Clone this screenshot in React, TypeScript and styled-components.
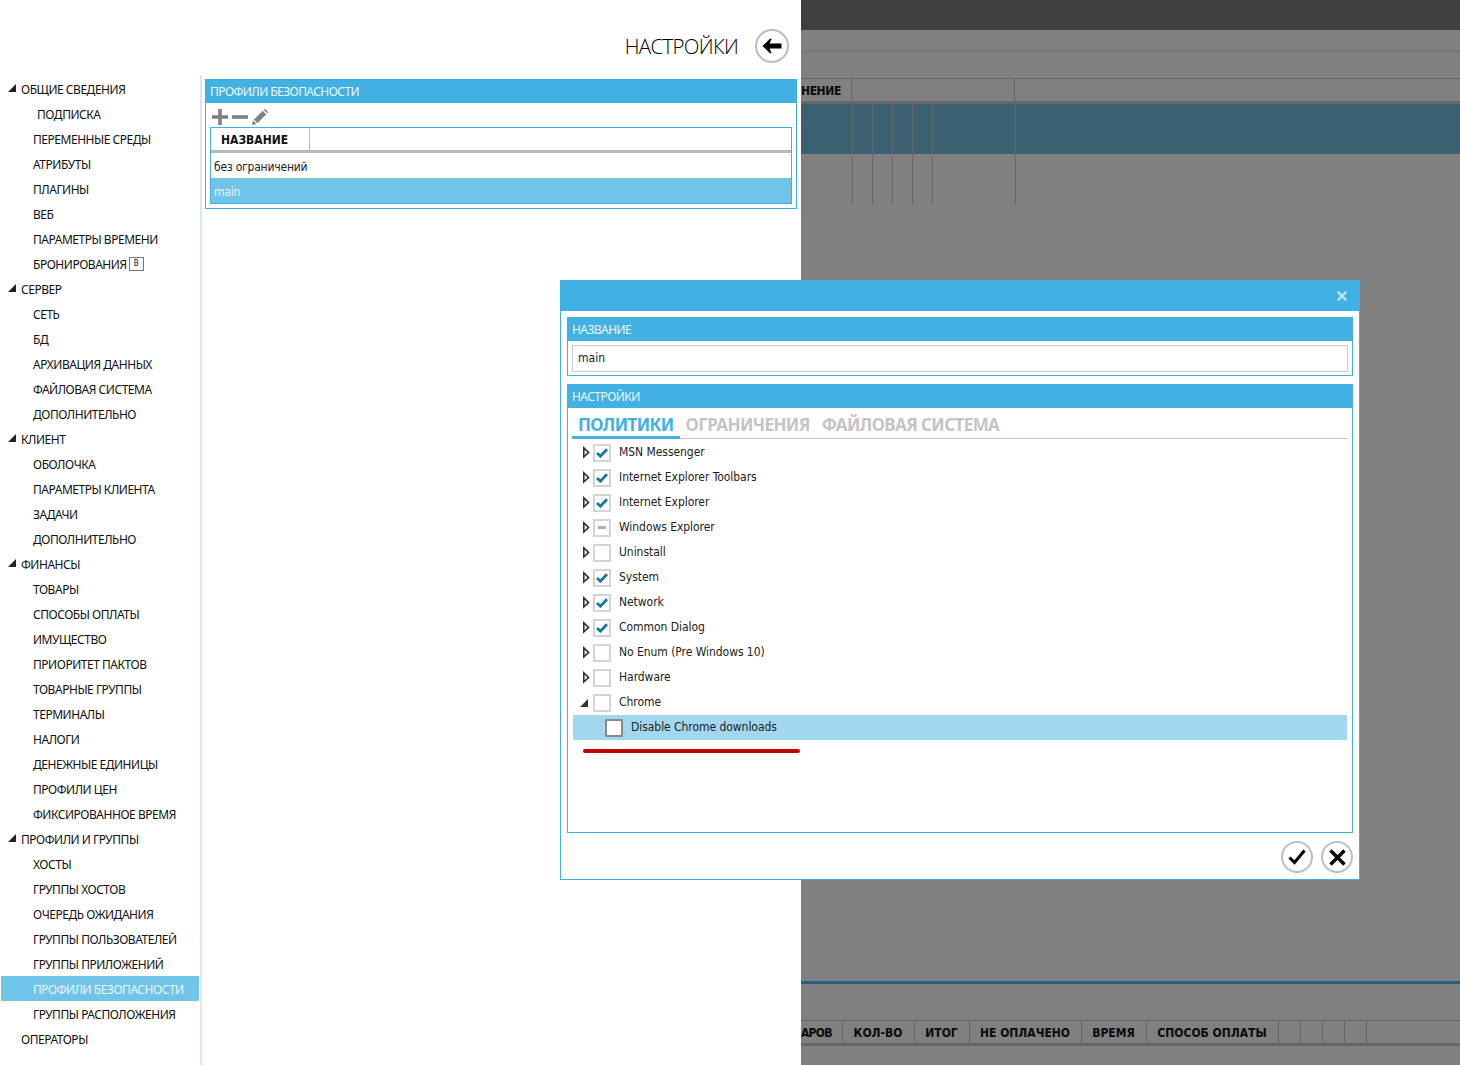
import React from "react";
import styled, { createGlobalStyle } from "styled-components";

const Blue = "#41b0e2";
const UI = `"Noto Sans", "Open Sans", "Liberation Sans", sans-serif`;
const TAH = `"DejaVu Sans Condensed", "DejaVu Sans", "Noto Sans", sans-serif`;

const Global = createGlobalStyle`
  html, body { margin: 0; padding: 0; background: #fff; overflow: hidden; }
  * { box-sizing: border-box; }
  body { font-family: ${UI}; font-size: 12px; color: #111; }
`;

const Page = styled.div`
  position: relative;
  display: flex;
  width: 1460px;
  height: 1065px;
  overflow: hidden;
`;

/* ---------- settings screen ---------- */
const Settings = styled.div`
  width: 801px;
  height: 1065px;
  display: flex;
  flex-direction: column;
  background: #fff;
`;
const TopBar = styled.header`
  height: 75px;
  padding: 29px 12px 0 0;
  display: flex;
  justify-content: flex-end;
  gap: 17px;
`;
const Title = styled.h1`
  margin: 0;
  height: 34px;
  font: 300 20.5px/34px "Open Sans", "Noto Sans", sans-serif;
  color: #000;
  letter-spacing: -0.7px;
`;
const RoundButton = styled.button`
  width: 34px;
  height: 34px;
  padding: 0;
  border: 2px solid #bdbdbd;
  border-radius: 50%;
  background: #fff;
  display: flex;
  align-items: center;
  justify-content: center;
`;
const Body = styled.div`
  flex: 1;
  display: flex;
  min-height: 0;
`;
const Sidebar = styled.nav`
  width: 202px;
  padding: 1px 0 0 1px;
  border-right: 2px solid #d3e9f5;
`;
const TreeRow = styled.div<{ $indent: number; $selected?: boolean }>`
  height: 25px;
  width: 198px;
  display: flex;
  align-items: center;
  padding: 2px 0 0 ${(p) => p.$indent}px;
  background: ${(p) => (p.$selected ? "#70c4e8" : "transparent")};
  color: ${(p) => (p.$selected ? "#e8f6fc" : "#111")};
  font: 400 12px/23px ${UI};
  letter-spacing: -0.47px;
  white-space: nowrap;
`;
const GroupArrow = styled.svg`
  width: 8px;
  height: 8px;
  margin: -3px 5px 0 0;
  flex: none;
`;
const Badge = styled.span`
  width: 15px;
  height: 14px;
  margin: -1px 0 0 2px;
  border: 1px solid #777;
  border-right-width: 1.5px;
  border-bottom-width: 1.5px;
  font: 400 8px/12px ${TAH};
  text-align: center;
  letter-spacing: 0;
`;
const Content = styled.main`
  flex: 1;
  padding: 4px 4px 0 3px;
`;
const Panel = styled.section`
  border: 1px solid ${Blue};
  padding-bottom: 4px;
`;
const PanelHead = styled.div`
  height: 24px;
  margin: -1px -1px 0;
  padding-left: 5px;
  background: ${Blue};
  color: #eef8fd;
  font: 400 12px/26px ${UI};
  letter-spacing: -0.55px;
  white-space: nowrap;
`;
const Toolbar = styled.div`
  height: 24px;
  padding: 6px 0 0 6px;
  display: flex;
  gap: 4px;
`;
const ToolIcon = styled.svg`
  width: 16px;
  height: 16px;
  display: block;
`;
const Table = styled.div`
  margin: 0 4px;
  border: 1px solid ${Blue};
`;
const TableHead = styled.div`
  height: 25px;
  display: flex;
  border-bottom: 3px solid #b9b9b9;
`;
const TableHeadCell = styled.div`
  width: 99px;
  padding-left: 10px;
  border-right: 1px solid #b9b9b9;
  font: 700 12px/24px ${TAH};
  color: #111;
`;
const TableRow = styled.div<{ $selected?: boolean }>`
  height: 25px;
  padding-left: 3px;
  background: ${(p) => (p.$selected ? "#70c4e8" : "#fff")};
  color: ${(p) => (p.$selected ? "#e8f6fc" : "#222")};
  font: 400 12px/28px ${TAH};
  letter-spacing: -0.2px;
`;

/* ---------- dimmed application behind ---------- */
const Backdrop = styled.div`
  flex: 1;
  display: flex;
  flex-direction: column;
  background: #808080;
`;
const DarkBar = styled.div`
  height: 30px;
  background: #404040;
`;
const BackLine = styled.div`
  height: 22px;
  border-bottom: 1px solid #6d7174;
`;
const BackSpacer = styled.div<{ $h: number }>`
  height: ${(p) => p.$h}px;
`;
const GridHead = styled.div`
  height: 26px;
  display: flex;
  border-top: 1px solid #666;
  border-bottom: 3px solid #666;
  overflow: hidden;
`;
const GridHeadCell = styled.div<{ $w: number; $tight?: number }>`
  width: ${(p) => p.$w}px;
  flex: none;
  padding-right: ${(p) => (p.$tight === undefined ? 1 : 0)}px;
  border-right: 1px solid #666;
  text-align: ${(p) => (p.$tight === undefined ? "center" : "left")};
  letter-spacing: ${(p) => p.$tight ?? 0}px;
  font-family: ${TAH};
  font-weight: 700;
  font-size: 12px;
  line-height: 25px;
  color: #0a0a0a;
  white-space: nowrap;
`;
const GridRow = styled.div<{ $h: number; $selected?: boolean }>`
  height: ${(p) => p.$h}px;
  display: flex;
  background: ${(p) => (p.$selected ? "#3a6072" : "transparent")};
`;
const GridCell = styled.div<{ $w: number }>`
  width: ${(p) => p.$w}px;
  flex: none;
  border-right: 1px solid #666;
`;
const GridFill = styled.div`
  flex: 1;
`;
const Divider = styled.div`
  height: 3px;
  background: #255f78;
`;

/* ---------- dialog ---------- */
const Dialog = styled.div`
  position: absolute;
  left: 560px;
  top: 280px;
  width: 800px;
  height: 600px;
  display: flex;
  flex-direction: column;
  background: #fff;
  border: 1px solid ${Blue};
`;
const DialogBar = styled.div`
  height: 31px;
  margin: -1px -1px 0;
  padding-right: 13px;
  flex: none;
  display: flex;
  align-items: center;
  justify-content: flex-end;
  background: ${Blue};
`;
const DialogBody = styled.div`
  flex: 1;
  padding: 6px 6px 0;
  display: flex;
  flex-direction: column;
`;
const NameBox = styled.section`
  height: 59px;
  border: 1px solid ${Blue};
`;
const NameInput = styled.div`
  margin: 4px 4px 0;
  height: 27px;
  padding-left: 5px;
  border: 1px solid #ccc;
  border-width: 1px 1.5px 1.5px 1px;
  font: 400 12px/25px ${TAH};
  color: #222;
`;
const OptionsBox = styled.section`
  height: 449px;
  margin-top: 8px;
  border: 1px solid ${Blue};
`;
const Tabs = styled.div`
  height: 31px;
  margin: 0 4px;
  display: flex;
  border-bottom: 1px solid #c4c4c4;
`;
const Tab = styled.div<{ $active?: boolean }>`
  height: 31px;
  padding: 0 6px;
  font: 700 17px/33px "Noto Sans", sans-serif;
  letter-spacing: -0.6px;
  white-space: nowrap;
  color: ${(p) => (p.$active ? Blue : "#c4c4c4")};
  border-bottom: ${(p) => (p.$active ? `3px solid ${Blue}` : "0")};
`;
const PolicyList = styled.div`
  padding: 1px 5px 0;
`;
const PolicyRow = styled.div<{ $selected?: boolean }>`
  height: 25px;
  display: flex;
  align-items: center;
  padding-left: ${(p) => (p.$selected ? 32 : 10)}px;
  background: ${(p) => (p.$selected ? "#a1d8f0" : "transparent")};
  font: 400 12px/25px ${TAH};
  letter-spacing: -0.05px;
  color: #222;
`;
const Twisty = styled.svg`
  width: 10px;
  height: 12px;
  flex: none;
  overflow: visible;
`;
const CheckBox = styled.span<{ $strong?: boolean }>`
  width: 18px;
  height: 18px;
  margin-right: 8px;
  flex: none;
  background: #fff;
  border: 2px solid ${(p) => (p.$strong ? "#8a8a8a" : "#d4d4d4")};
  display: flex;
  align-items: center;
  justify-content: center;
`;
const PartialMark = styled.span`
  width: 8px;
  height: 3px;
  background: #b0b0b0;
`;
const RedMark = styled.div`
  margin: 9px 0 0 10px;
  width: 217px;
  height: 4px;
  border-radius: 2px;
  background: #bf0000;
`;
const DialogActions = styled.div`
  padding-top: 8px;
  display: flex;
  justify-content: flex-end;
  gap: 8px;
`;
const RoundAction = styled(RoundButton)`
  width: 32px;
  height: 32px;
`;

type Item = { t: string; l: 0 | 1 | 2; x?: number; badge?: boolean; sel?: boolean };
const items: Item[] = [
  { t: "ОБЩИЕ СВЕДЕНИЯ", l: 0 },
  { t: "ПОДПИСКА", l: 1, x: 36 },
  { t: "ПЕРЕМЕННЫЕ СРЕДЫ", l: 1 },
  { t: "АТРИБУТЫ", l: 1 },
  { t: "ПЛАГИНЫ", l: 1 },
  { t: "ВЕБ", l: 1 },
  { t: "ПАРАМЕТРЫ ВРЕМЕНИ", l: 1 },
  { t: "БРОНИРОВАНИЯ", l: 1, badge: true },
  { t: "СЕРВЕР", l: 0 },
  { t: "СЕТЬ", l: 1 },
  { t: "БД", l: 1 },
  { t: "АРХИВАЦИЯ ДАННЫХ", l: 1 },
  { t: "ФАЙЛОВАЯ СИСТЕМА", l: 1 },
  { t: "ДОПОЛНИТЕЛЬНО", l: 1 },
  { t: "КЛИЕНТ", l: 0 },
  { t: "ОБОЛОЧКА", l: 1 },
  { t: "ПАРАМЕТРЫ КЛИЕНТА", l: 1 },
  { t: "ЗАДАЧИ", l: 1 },
  { t: "ДОПОЛНИТЕЛЬНО", l: 1 },
  { t: "ФИНАНСЫ", l: 0 },
  { t: "ТОВАРЫ", l: 1 },
  { t: "СПОСОБЫ ОПЛАТЫ", l: 1 },
  { t: "ИМУЩЕСТВО", l: 1 },
  { t: "ПРИОРИТЕТ ПАКТОВ", l: 1 },
  { t: "ТОВАРНЫЕ ГРУППЫ", l: 1 },
  { t: "ТЕРМИНАЛЫ", l: 1 },
  { t: "НАЛОГИ", l: 1 },
  { t: "ДЕНЕЖНЫЕ ЕДИНИЦЫ", l: 1 },
  { t: "ПРОФИЛИ ЦЕН", l: 1 },
  { t: "ФИКСИРОВАННОЕ ВРЕМЯ", l: 1 },
  { t: "ПРОФИЛИ И ГРУППЫ", l: 0 },
  { t: "ХОСТЫ", l: 1 },
  { t: "ГРУППЫ ХОСТОВ", l: 1 },
  { t: "ОЧЕРЕДЬ ОЖИДАНИЯ", l: 1 },
  { t: "ГРУППЫ ПОЛЬЗОВАТЕЛЕЙ", l: 1 },
  { t: "ГРУППЫ ПРИЛОЖЕНИЙ", l: 1 },
  { t: "ПРОФИЛИ БЕЗОПАСНОСТИ", l: 1, sel: true },
  { t: "ГРУППЫ РАСПОЛОЖЕНИЯ", l: 1 },
  { t: "ОПЕРАТОРЫ", l: 2 },
];

const ExpandedArrow = () => (
  <GroupArrow viewBox="0 0 8 8">
    <path d="M0 8 L8 8 L8 0 Z" fill="#222" />
  </GroupArrow>
);

const Check = () => (
  <svg width="12" height="10" viewBox="0 0 12 10">
    <path d="M1 5 L4.400 8.200 L11 1.200" fill="none" stroke="#1a77a8" strokeWidth="2.800" />
  </svg>
);

type Policy = { t: string; s: "on" | "off" | "part"; open?: boolean };
const policies: Policy[] = [
  { t: "MSN Messenger", s: "on" },
  { t: "Internet Explorer Toolbars", s: "on" },
  { t: "Internet Explorer", s: "on" },
  { t: "Windows Explorer", s: "part" },
  { t: "Uninstall", s: "off" },
  { t: "System", s: "on" },
  { t: "Network", s: "on" },
  { t: "Common Dialog", s: "on" },
  { t: "No Enum (Pre Windows 10)", s: "off" },
  { t: "Hardware", s: "off" },
  { t: "Chrome", s: "off", open: true },
];

const topCells = [20, 20, 20, 20, 83];
const bottomCols: [string, number, number?][] = [
  ["АРОВ", 42, -0.75],
  ["КОЛ-ВО", 72],
  ["ИТОГ", 55],
  ["НЕ ОПЛАЧЕНО", 112],
  ["ВРЕМЯ", 65],
  ["СПОСОБ ОПЛАТЫ", 132],
  ["", 22],
  ["", 22],
  ["", 22],
  ["", 22],
];

export default function App() {
  return (
    <Page>
      <Global />
      <Settings>
        <TopBar>
          <Title>НАСТРОЙКИ</Title>
          <RoundButton aria-label="Назад">
            <svg width="20" height="16" viewBox="0 0 20 16">
              <path d="M0.500 8 L8 0.800 L9.600 0.800 L7.600 5.600 L19.500 5.600 L19.500 10.400 L7.600 10.400 L9.600 15.200 L8 15.200 Z" fill="#000" />
            </svg>
          </RoundButton>
        </TopBar>
        <Body>
          <Sidebar>
            {items.map((it, i) => (
              <TreeRow key={i} $indent={it.x ?? (it.l === 0 ? 7 : it.l === 2 ? 20 : 32)} $selected={it.sel}>
                {it.l === 0 && <ExpandedArrow />}
                {it.t}
                {it.badge && <Badge>В</Badge>}
              </TreeRow>
            ))}
          </Sidebar>
          <Content>
            <Panel>
              <PanelHead>ПРОФИЛИ БЕЗОПАСНОСТИ</PanelHead>
              <Toolbar>
                <ToolIcon viewBox="0 0 16 16">
                  <path d="M6.200 0h3.600v6.200H16v3.600H9.800V16H6.200V9.800H0V6.200h6.200z" fill="#808080" />
                </ToolIcon>
                <ToolIcon viewBox="0 0 16 16">
                  <rect x="0" y="6.200" width="16" height="3.600" fill="#808080" />
                </ToolIcon>
                <ToolIcon viewBox="0 0 16 16">
                  <path d="M0 16 L1 11.400 L4.600 15 Z M1.800 10.600 L10.600 1.800 L14.200 5.400 L5.400 14.200 Z M11.600 0.800 L13 0 L16 3 L15.200 4.400 Z" fill="#808080" />
                </ToolIcon>
              </Toolbar>
              <Table>
                <TableHead>
                  <TableHeadCell>НАЗВАНИЕ</TableHeadCell>
                </TableHead>
                <TableRow>без ограничений</TableRow>
                <TableRow $selected>main</TableRow>
              </Table>
            </Panel>
          </Content>
        </Body>
      </Settings>

      <Backdrop>
        <DarkBar />
        <BackLine />
        <BackSpacer $h={26} />
        <GridHead>
          <GridHeadCell $w={51} $tight={-0.4}>НЕНИЕ</GridHeadCell>
          <GridHeadCell $w={163} />
        </GridHead>
        <GridRow $h={50} $selected>
          <GridCell $w={52} />
          {topCells.map((w, i) => (
            <GridCell key={i} $w={w} />
          ))}
          <GridFill />
        </GridRow>
        <GridRow $h={50}>
          <GridCell $w={52} />
          {topCells.map((w, i) => (
            <GridCell key={i} $w={w} />
          ))}
          <GridFill />
        </GridRow>
        <BackSpacer $h={777} />
        <Divider />
        <BackSpacer $h={36} />
        <GridHead>
          {bottomCols.map(([t, w, tight], i) => (
            <GridHeadCell key={i} $w={w} $tight={tight}>
              {t}
            </GridHeadCell>
          ))}
        </GridHead>
      </Backdrop>

      <Dialog>
        <DialogBar>
          <svg width="10" height="10" viewBox="0 0 10 10">
            <path d="M0.800 0.800 L9.200 9.200 M9.200 0.800 L0.800 9.200" stroke="#b9e4f6" strokeWidth="2.400" />
          </svg>
        </DialogBar>
        <DialogBody>
          <NameBox>
            <PanelHead>НАЗВАНИЕ</PanelHead>
            <NameInput>main</NameInput>
          </NameBox>
          <OptionsBox>
            <PanelHead>НАСТРОЙКИ</PanelHead>
            <Tabs>
              <Tab $active>ПОЛИТИКИ</Tab>
              <Tab>ОГРАНИЧЕНИЯ</Tab>
              <Tab>ФАЙЛОВАЯ СИСТЕМА</Tab>
            </Tabs>
            <PolicyList>
              {policies.map((p) => (
                <PolicyRow key={p.t}>
                  <Twisty viewBox="0 0 10 12">
                    {p.open ? (
                      <path d="M-3 10 L5 10 L5 2 Z" fill="#333" />
                    ) : (
                      <path d="M0.800 0.800 L5.600 5.400 L0.800 10 Z" fill="#fff" stroke="#333" strokeWidth="1.600" />
                    )}
                  </Twisty>
                  <CheckBox>
                    {p.s === "on" && <Check />}
                    {p.s === "part" && <PartialMark />}
                  </CheckBox>
                  {p.t}
                </PolicyRow>
              ))}
              <PolicyRow $selected>
                <CheckBox $strong />
                Disable Chrome downloads
              </PolicyRow>
              <RedMark />
            </PolicyList>
          </OptionsBox>
          <DialogActions>
            <RoundAction aria-label="Сохранить">
              <svg width="18" height="16" viewBox="0 0 18 16">
                <path d="M1.500 8.500 L6.500 13.500 L16.500 1.500" fill="none" stroke="#000" strokeWidth="3" />
              </svg>
            </RoundAction>
            <RoundAction aria-label="Закрыть">
              <svg width="17" height="17" viewBox="0 0 17 17">
                <path d="M1.500 1.500 L15.500 15.500 M15.500 1.500 L1.500 15.500" fill="none" stroke="#000" strokeWidth="3.400" />
              </svg>
            </RoundAction>
          </DialogActions>
        </DialogBody>
      </Dialog>
    </Page>
  );
}
